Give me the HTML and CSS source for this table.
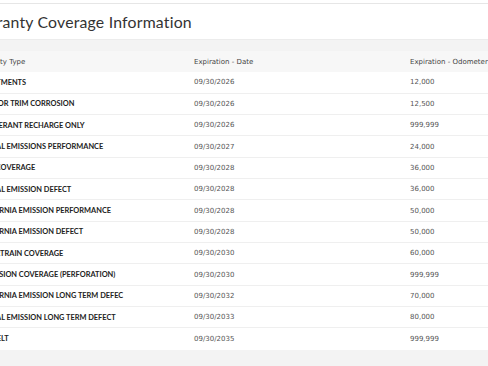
FILE: index.html
```html
<!DOCTYPE html>
<html lang="en">
<head>
    <meta charset="UTF-8">
    <meta name="viewport" content="width=device-width, initial-scale=1.0">
    <title>Warranty Coverage Information</title>
    <link rel="stylesheet" href="styles.css">
</head>
<body>
    <div class="topbar"></div>
    <div class="page">
        <div class="title-card">
            <h1 class="title">Warranty Coverage Information</h1>
        </div>

        <div class="table-card">
            <table class="warranty">
                <colgroup>
                    <col class="col-type">
                    <col class="col-date">
                    <col class="col-odo">
                </colgroup>
                <thead>
                    <tr>
                        <th>Warranty Type</th>
                        <th>Expiration - Date</th>
                        <th>Expiration - Odometer</th>
                    </tr>
                </thead>
                <tbody>
                    <tr><td class="type">ADJUSTMENTS</td><td>09/30/2026</td><td>12,000</td></tr>
                    <tr><td class="type">EXTERIOR TRIM CORROSION</td><td>09/30/2026</td><td>12,500</td></tr>
                    <tr><td class="type">REFRIGERANT RECHARGE ONLY</td><td>09/30/2026</td><td>999,999</td></tr>
                    <tr><td class="type">FEDERAL EMISSIONS PERFORMANCE</td><td>09/30/2027</td><td>24,000</td></tr>
                    <tr><td class="type">BASIC COVERAGE</td><td>09/30/2028</td><td>36,000</td></tr>
                    <tr><td class="type">FEDERAL EMISSION DEFECT</td><td>09/30/2028</td><td>36,000</td></tr>
                    <tr><td class="type">CALIFORNIA EMISSION PERFORMANCE</td><td>09/30/2028</td><td>50,000</td></tr>
                    <tr><td class="type">CALIFORNIA EMISSION DEFECT</td><td>09/30/2028</td><td>50,000</td></tr>
                    <tr><td class="type">POWERTRAIN COVERAGE</td><td>09/30/2030</td><td>60,000</td></tr>
                    <tr><td class="type">CORROSION COVERAGE (PERFORATION)</td><td>09/30/2030</td><td>999,999</td></tr>
                    <tr><td class="type">CALIFORNIA EMISSION LONG TERM DEFEC</td><td>09/30/2032</td><td>70,000</td></tr>
                    <tr><td class="type">FEDERAL EMISSION LONG TERM DEFECT</td><td>09/30/2033</td><td>80,000</td></tr>
                    <tr><td class="type">SEAT BELT</td><td>09/30/2035</td><td>999,999</td></tr>
                </tbody>
            </table>
        </div>
    </div>
</body>
</html>
```

FILE: styles.css
```css
* {
    margin: 0;
    padding: 0;
    box-sizing: border-box;
}

body {
    font-family: "DejaVu Sans", "Open Sans", sans-serif;
    background: #f3f3f3;
    color: #333;
    overflow: hidden;
}

.topbar {
    height: 4px;
    background: #fff;
    border-bottom: 1px solid #e6e6e6;
}

/* page is scrolled sideways, so the left edge starts off screen */
.page {
    margin-left: -48px;
    width: 620px;
}

.title-card {
    background: #fff;
    height: 36px;
    padding: 0 15px;
    display: flex;
    align-items: center;
    border-bottom: 1px solid #ececec;
}

.title {
    font-family: Lato, "Open Sans", sans-serif;
    font-size: 15.8px;
    font-weight: 400;
    color: #333;
    letter-spacing: 0.2px;
}

.table-card {
    margin-top: 11px;
    background: #fff;
    box-shadow: 0 3px 4px rgba(0, 0, 0, 0.08);
    padding-bottom: 1px;
}

.warranty {
    width: 100%;
    border-collapse: collapse;
    table-layout: fixed;
}

.col-type {
    width: 224px;
}

.col-date {
    width: 216px;
}

.warranty th,
.warranty td {
    text-align: left;
    padding: 0 18px;
    height: 21.33px;
    font-size: 7px;
    white-space: nowrap;
    overflow: hidden;
}

.warranty th:first-child {
    padding-left: 23px;
}

.warranty td:first-child {
    padding-left: 21px;
}

.warranty th {
    background: #f7f7f7;
    font-weight: 400;
    color: #444;
    height: 21px;
}

.warranty td {
    color: #555;
    border-bottom: 1px solid #efefef;
}

.warranty tbody tr:last-child td {
    border-bottom: none;
}

.warranty td.type {
    font-family: Lato, "Open Sans", sans-serif;
    font-size: 7.4px;
    font-weight: 700;
    color: #222;
}
```
